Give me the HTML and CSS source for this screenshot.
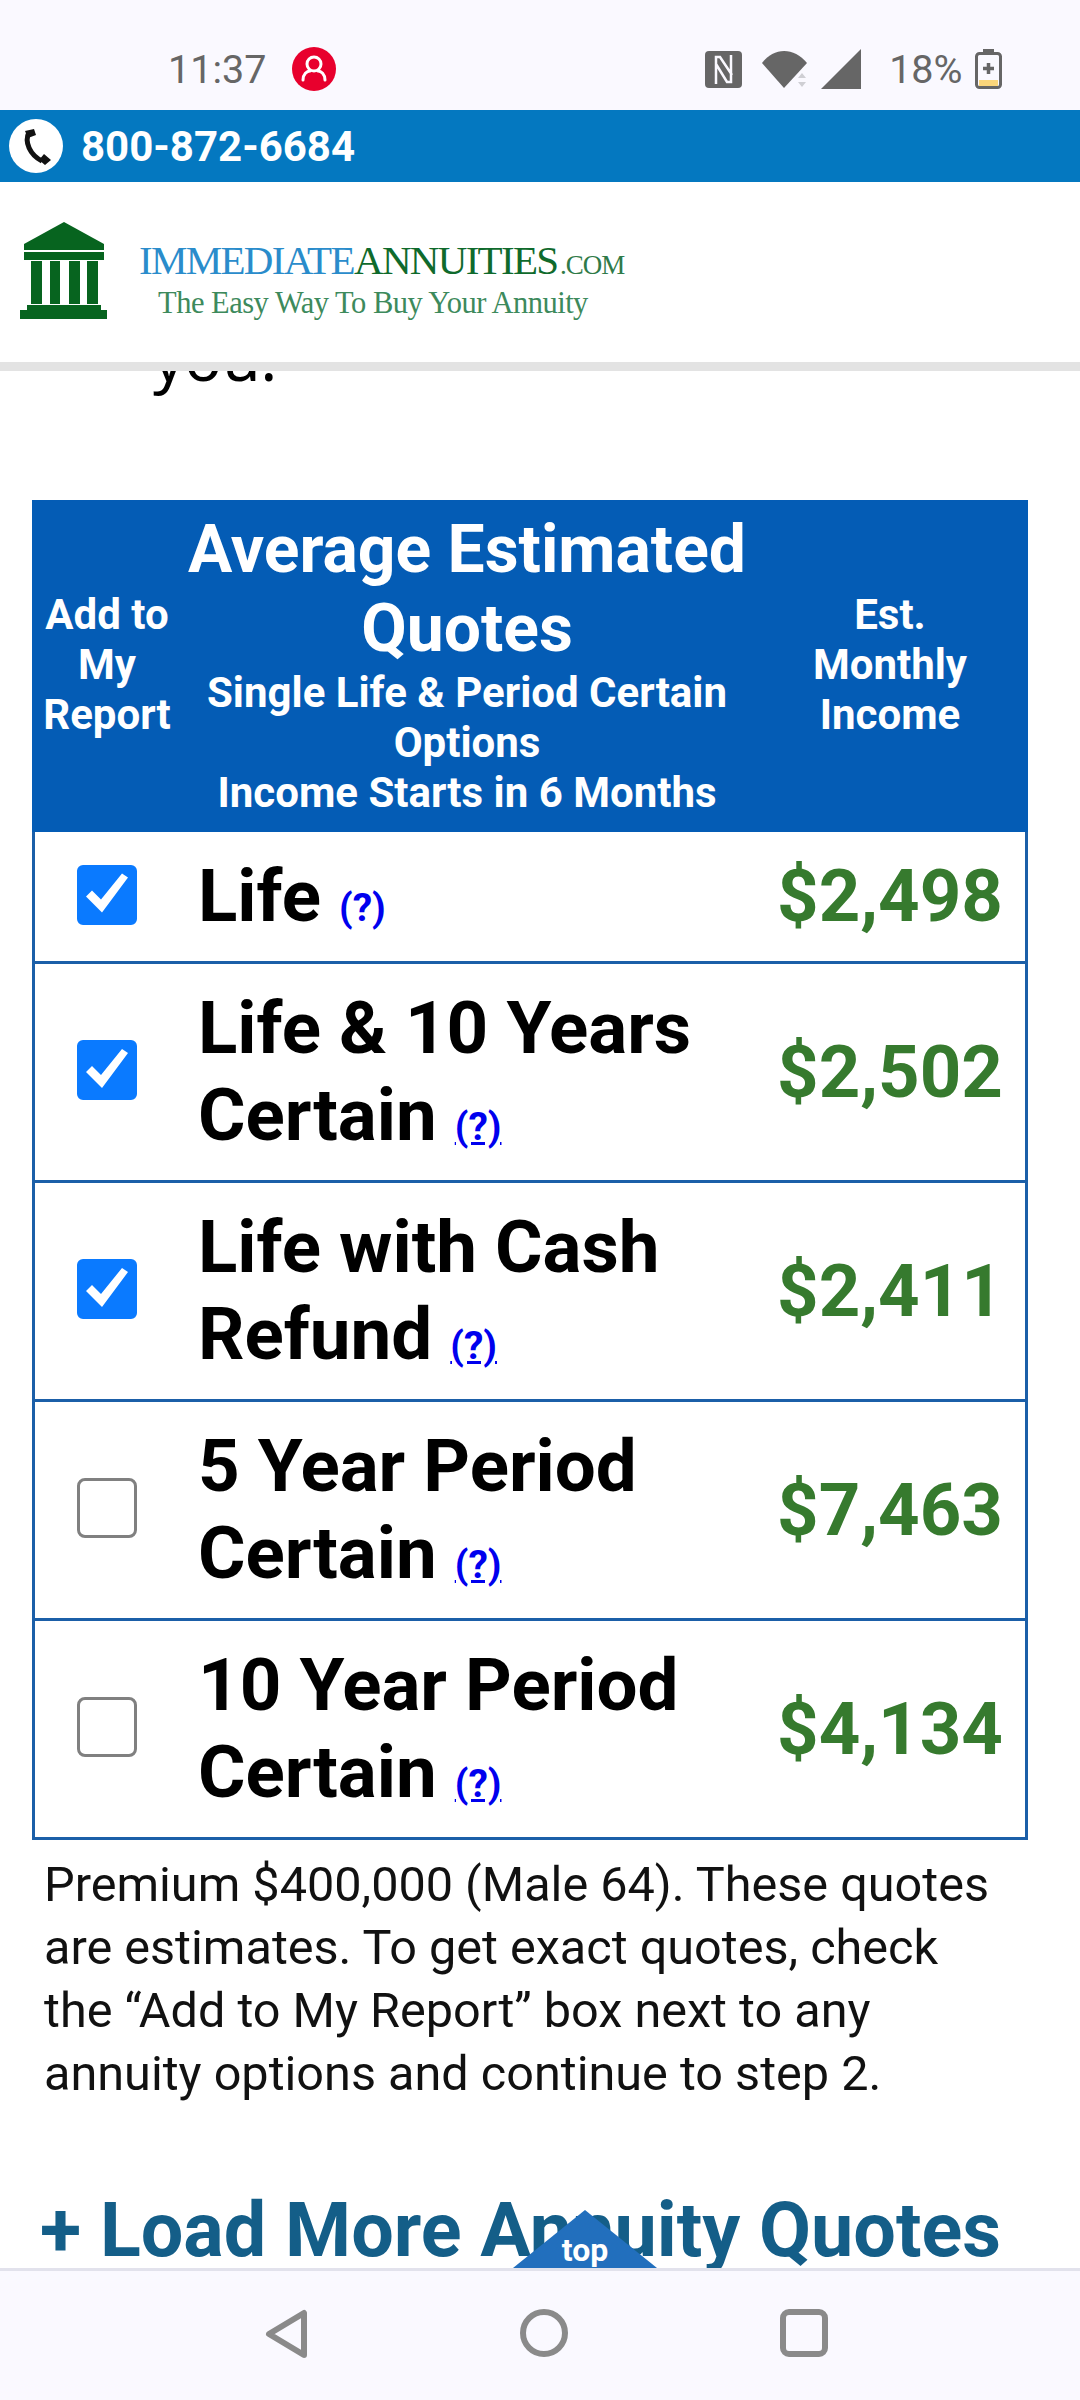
FILE: index.html
```html
<!DOCTYPE html>
<html lang="en">
<head>
  <meta charset="UTF-8">
  <meta name="viewport" content="width=device-width, initial-scale=1.0">
  <title>Immediate Annuities</title>
  <link rel="stylesheet" href="styles.css">
</head>
<body>
  <div class="status-bar">
    <div class="status-left">
      <span class="clock">11:37</span>
      <svg class="profile" width="44" height="44" viewBox="0 0 44 44">
        <circle cx="22" cy="22" r="22" fill="#e8002d"/>
        <circle cx="22" cy="17" r="7" fill="none" stroke="#fff" stroke-width="3"/>
        <path d="M11 33c0-6 4-9 7-9M33 33c0-6-4-9-7-9" fill="none" stroke="#fff" stroke-width="3" stroke-linecap="round"/>
      </svg>
    </div>
    <div class="status-right">
      <svg class="nfc" width="37" height="37" viewBox="0 0 37 37">
        <rect width="37" height="37" rx="4" fill="#666"/>
        <path d="M11 33V6h4l12 18M26 4v27h-4L11 13" fill="none" stroke="#faf9ff" stroke-width="2.500"/>
      </svg>
      <svg class="wifi" width="46" height="38" viewBox="0 0 46 38">
        <path d="M0 13C12 -3 32 -3 45 13L22 38z" fill="#666"/>
        <path d="M40 23l4 5h-8zM40 37l-4-5h8z" fill="#cfcfd4"/>
      </svg>
      <svg class="signal" width="40" height="40" viewBox="0 0 40 40">
        <path d="M40 0V40H0z" fill="#666"/>
      </svg>
      <span class="battery-pct">18%</span>
      <svg class="battery" width="27" height="40" viewBox="0 0 27 40">
        <rect x="8" y="0" width="11" height="5" fill="#666"/>
        <rect x="4" y="31" width="19" height="6" fill="#fbd67a"/>
        <rect x="1.500" y="4.500" width="24" height="34" rx="3" fill="none" stroke="#666" stroke-width="3"/>
        <path d="M13.500 14v11M8 19.500h11" stroke="#666" stroke-width="3.500"/>
      </svg>
    </div>
  </div>

  <div class="call-bar">
    <svg class="call-icon" width="54" height="54" viewBox="0 0 54 54">
      <circle cx="27" cy="27" r="27" fill="#fff"/>
      <path d="M20 13C15 23 21 36 33 42" fill="none" stroke="#111" stroke-width="5"/>
      <path d="M16 12l9-2 2 6-8 3zM30 41l5-6 7 6-6 5z" fill="#111"/>
    </svg>
    <span class="call-number">800-872-6684</span>
  </div>

  <div class="site-header">
    <svg class="temple" width="88" height="97" viewBox="0 0 88 97">
      <path d="M44 0L84 22V28H4V22z" fill="#07641f"/>
      <rect x="4" y="30" width="80" height="8" fill="#07641f"/>
      <path d="M11 39h11v43H11zM30 39h10v43H30zM49 39h11v43H49zM67 39h11v43H67z" fill="#07641f"/>
      <path d="M7 83H81V88H87V97H0V88H7z" fill="#07641f"/>
    </svg>
    <div class="brand">
      <div class="brand-name"><span class="brand-blue">IMMEDIATE</span> <span class="brand-green">ANNUITIES</span> <span class="brand-com">.COM</span></div>
      <div class="brand-tag">The Easy Way To Buy Your Annuity</div>
    </div>
  </div>

  <main class="content">
    <p class="lead">you.</p>

    <table class="quotes">
      <colgroup>
        <col class="col-add">
        <col class="col-name">
        <col class="col-price">
      </colgroup>
      <thead>
        <tr>
          <th class="th-side">Add to My Report</th>
          <th class="th-main">
            <div class="th-title">Average Estimated Quotes</div>
            <div class="th-sub">Single Life &amp; Period Certain Options</div>
            <div class="th-sub">Income Starts in 6 Months</div>
          </th>
          <th class="th-side th-income">Est. Monthly Income</th>
        </tr>
      </thead>
      <tbody>
        <tr>
          <td class="cell-check"><input type="checkbox" checked></td>
          <td class="cell-name">Life <a href="#" class="help help-plain">(?)</a></td>
          <td class="cell-price">$2,498</td>
        </tr>
        <tr>
          <td class="cell-check"><input type="checkbox" checked></td>
          <td class="cell-name">Life &amp; 10 Years Certain <a href="#" class="help">(?)</a></td>
          <td class="cell-price">$2,502</td>
        </tr>
        <tr>
          <td class="cell-check"><input type="checkbox" checked></td>
          <td class="cell-name">Life with Cash Refund <a href="#" class="help">(?)</a></td>
          <td class="cell-price">$2,411</td>
        </tr>
        <tr>
          <td class="cell-check"><input type="checkbox"></td>
          <td class="cell-name">5 Year Period Certain <a href="#" class="help">(?)</a></td>
          <td class="cell-price">$7,463</td>
        </tr>
        <tr>
          <td class="cell-check"><input type="checkbox"></td>
          <td class="cell-name">10 Year Period Certain <a href="#" class="help">(?)</a></td>
          <td class="cell-price">$4,134</td>
        </tr>
      </tbody>
    </table>

    <p class="note">Premium $400,000 (Male 64). These quotes are estimates. To get exact quotes, check the “Add to My Report” box next to any annuity options and continue to step 2.</p>

    <div class="load-more">+ Load More Annuity Quotes</div>

    <a href="#" class="to-top"><span>top</span></a>
  </main>

  <div class="nav-bar">
    <svg width="43" height="50" viewBox="0 0 43 50">
      <path d="M39 4V46L4 25z" fill="none" stroke="#8a8a8a" stroke-width="6" stroke-linejoin="round"/>
    </svg>
    <svg width="48" height="48" viewBox="0 0 48 48">
      <circle cx="24" cy="24" r="21" fill="none" stroke="#8a8a8a" stroke-width="6"/>
    </svg>
    <svg width="48" height="48" viewBox="0 0 48 48">
      <rect x="3" y="3" width="42" height="42" rx="6" fill="none" stroke="#8a8a8a" stroke-width="6"/>
    </svg>
  </div>
</body>
</html>
```

FILE: styles.css
```css
* {
  box-sizing: border-box;
}
html, body {
  margin: 0;
  padding: 0;
}
body {
  width: 1080px;
  height: 2400px;
  display: flex;
  flex-direction: column;
  font-family: Roboto, Arial, sans-serif;
  background-color: #fff;
  overflow: hidden;
}

/* status bar */
.status-bar {
  height: 110px;
  background-color: #faf9ff;
  color: #666;
  font-size: 39.5px;
  display: flex;
  justify-content: space-between;
  align-items: center;
  padding: 28px 78px 0 168px;
  flex-shrink: 0;
}
.status-left, .status-right {
  display: flex;
  align-items: center;
}
.status-left {
  gap: 26px;
}
.nfc {
  margin-right: 20px;
}
.wifi {
  margin-right: 13px;
}
.signal {
  margin-right: 28.5px;
}
.battery {
  margin-left: 12.5px;
}

/* phone number */
.call-bar {
  height: 72px;
  background-color: #0478c0;
  display: flex;
  align-items: center;
  padding-left: 9px;
  flex-shrink: 0;
}
.call-number {
  color: #fff;
  font-size: 42px;
  font-weight: 700;
  margin-left: 18px;
}

/* logo */
.site-header {
  height: 189px;
  background-color: #fff;
  border-bottom: 9px solid #e3e3e3;
  display: flex;
  padding: 40px 0 0 20px;
  flex-shrink: 0;
  position: relative;
  z-index: 1;
}
.brand {
  margin-left: 31px;
  font-family: "Liberation Serif", "Times New Roman", serif;
  padding-top: 17px;
}
.brand-name {
  font-size: 41px;
  line-height: 42px;
  letter-spacing: -1.7px;
  white-space: nowrap;
  word-spacing: -6px;
}
.brand-blue {
  color: #2a8ccb;
}
.brand-green {
  color: #0f6a2c;
}
.brand-com {
  color: #2f7a48;
  font-size: 27px;
  letter-spacing: -1px;
}
.brand-tag {
  font-size: 30.5px;
  line-height: 34px;
  color: #3d8a5c;
  letter-spacing: -0.5px;
  margin-left: 19px;
  white-space: nowrap;
}

/* page content, scrolled under the header */
.content {
  flex: 1;
  position: relative;
  overflow: hidden;
  min-height: 0;
}
.lead {
  margin: -54px 0 0 153px;
  font-family: "Noto Sans", Roboto, sans-serif;
  font-size: 62px;
  line-height: 80px;
  color: #000;
}
.quotes {
  width: 996px;
  margin: 103px 0 0 32px;
  border-collapse: separate;
  border-spacing: 0;
  table-layout: fixed;
}
.col-add {
  width: 150px;
}
.col-name {
  width: 570px;
}
.col-price {
  width: 276px;
}
.quotes thead tr {
  background-color: #045cb5;
  color: #fff;
}
.quotes th {
  font-weight: 700;
  padding: 0 0 2px;
  text-align: center;
}
.th-side {
  font-size: 42px;
  line-height: 50px;
}
.quotes .th-income {
  padding: 0 24px 2px;
}
.quotes .th-main {
  padding: 10px 0 14px;
}
.th-title {
  font-size: 66px;
  line-height: 79px;
}
.th-sub {
  font-size: 42px;
  line-height: 50px;
}
.quotes td {
  padding: 0;
  vertical-align: middle;
  border-bottom: 3px solid #1b5fa8;
}
.quotes td:first-child {
  border-left: 3px solid #1b5fa8;
}
.quotes td:last-child {
  border-right: 3px solid #1b5fa8;
}
.cell-check input {
  appearance: none;
  position: relative;
  display: block;
  width: 60px;
  height: 60px;
  margin: -2px 0 2px 42px;
  border: 3px solid #808080;
  border-radius: 8px;
  background-color: #fff;
}
.cell-check input:checked {
  background-color: #0a7aff;
  border-color: #0a7aff;
  border-radius: 6px;
}
.cell-check input:checked::after {
  content: "";
  position: absolute;
  inset: -3px;
  background-color: #fff;
  clip-path: polygon(9px 32px, 25px 48px, 51px 13px, 45px 9px, 24px 35px, 15px 26px);
}
.quotes .cell-name {
  font-size: 72.7px;
  font-weight: 700;
  line-height: 87px;
  color: #000;
  padding: 21px 0 21px 16px;
}
.help {
  font-size: 39px;
  line-height: 1;
  color: #0000ee;
}
.help-plain {
  text-decoration: none;
}
.quotes .cell-price {
  font-size: 72.5px;
  font-weight: 700;
  color: #367a2e;
  text-align: center;
  padding-left: 3px;
}
.note {
  margin: 13px 0 0 44px;
  width: 955px;
  font-size: 48.6px;
  line-height: 63px;
  color: #111;
}
.load-more {
  margin: 81px 0 0 40px;
  font-size: 75.5px;
  font-weight: 700;
  line-height: 88px;
  color: #145e88;
  white-space: nowrap;
}
.to-top {
  position: absolute;
  left: 513px;
  bottom: 0;
  width: 144px;
  height: 58px;
  background-color: #226fbd;
  clip-path: polygon(50% 0, 100% 100%, 0 100%);
  color: #fff;
  font-size: 32px;
  font-weight: 700;
  text-align: center;
  text-decoration: none;
  line-height: 58px;
  padding-top: 11px;
}

/* android nav */
.nav-bar {
  height: 132px;
  background-color: #faf9ff;
  border-top: 3px solid #e2e2ec;
  display: flex;
  align-items: flex-start;
  padding: 38px 0 0 265px;
  gap: 212px;
  flex-shrink: 0;
}
```
